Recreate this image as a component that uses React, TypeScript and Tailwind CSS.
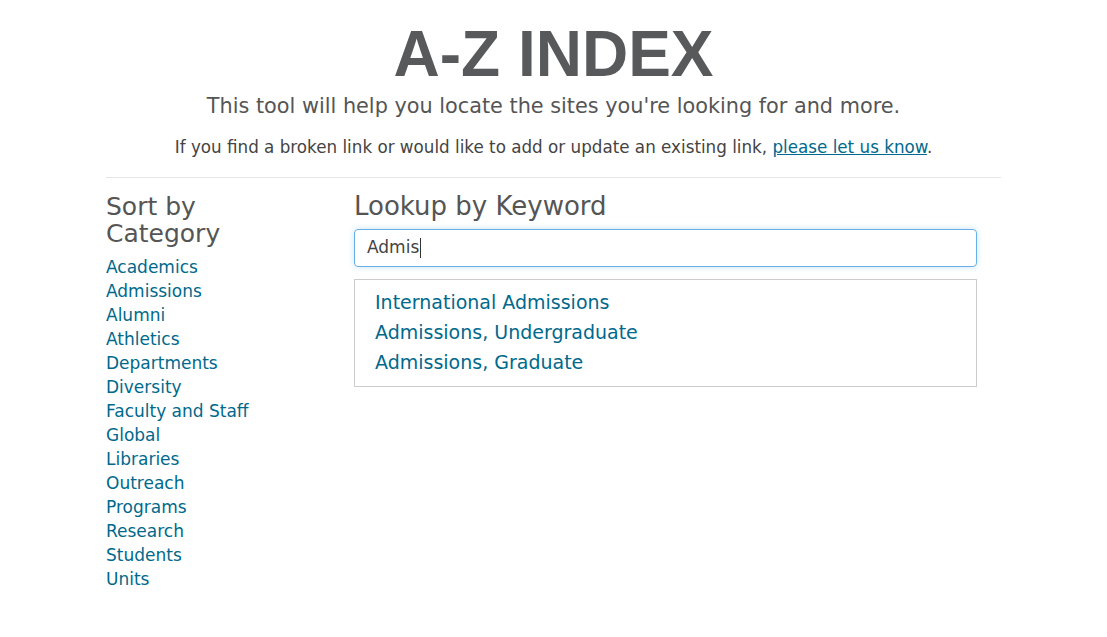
import React from "react";

const cats = ["Academics","Admissions","Alumni","Athletics","Departments","Diversity","Faculty and Staff","Global","Libraries","Outreach","Programs","Research","Students","Units"];
const results = ["International Admissions","Admissions, Undergraduate","Admissions, Graduate"];

export default function App() {
  return (
    <div className="min-h-[637px] bg-white text-[#555] font-['DejaVu_Sans',sans-serif]">
      <div className="mx-auto w-[895px] pt-[18px]">
        <h1 className="text-center text-[64px] leading-[72px] font-bold text-[#58595b] font-['Liberation_Sans',sans-serif]">A-Z INDEX</h1>
        <p className="text-center text-[20.8px] leading-[28px] mt-[2px] text-[#555]">This tool will help you locate the sites you're looking for and more.</p>
        <p className="text-center text-[16.75px] leading-[22px] mt-[16px] text-[#444]">
          If you find a broken link or would like to add or update an existing link, <a href="#" className="text-[#00698c] underline">please let us know</a>.
        </p>
        <div className="mt-[19px] border-t border-[#e5e5e5]" />
        <div className="flex pt-[15px]">
          <div className="w-[248px] shrink-0">
            <h2 className="text-[25px] leading-[27px] text-[#555] w-[140px]">Sort by Category</h2>
            <ul className="mt-[8px]">
              {cats.map((c) => (
                <li key={c} className="text-[17px] leading-[24px]"><a href="#" className="text-[#00698c]">{c}</a></li>
              ))}
            </ul>
          </div>
          <div className="w-[623px]">
            <h2 className="text-[26px] leading-[27px] text-[#555]">Lookup by Keyword</h2>
            <div className="mt-[9px] h-[38px] rounded-[4px] border border-[#66afe9] shadow-[0_0_6px_rgba(102,175,233,0.35)] flex items-center px-[12px] text-[17px] text-[#444]">
              Admis<span className="inline-block w-[1px] h-[20px] bg-[#333] ml-[1px]" />
            </div>
            <div className="mt-[12px] border border-[#ccc] pt-[7px] pb-[9px] px-[20px]">
              {results.map((r) => (
                <div key={r} className="text-[19px] leading-[30px]"><a href="#" className="text-[#00698c]">{r}</a></div>
              ))}
            </div>
          </div>
        </div>
      </div>
    </div>
  );
}
